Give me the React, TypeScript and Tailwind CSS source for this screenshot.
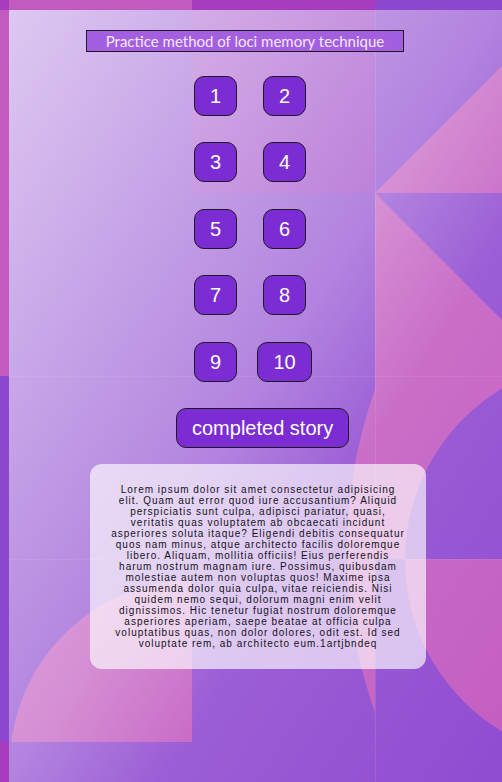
import React from 'react';

const PINK = '#c25ac0';
const MAG = '#a83cbf';
const PURP = '#8e48d0';
const T = 183;

// column / row origins of the background tiles
const COLS = [-174, 9, 192, 375];
const ROWS = [-173, 10, 193, 376, 559, 742];

const BASE: string[][] = [
  [MAG, PINK, MAG, PURP],
  [PINK, PURP, '#9c44c8', PURP],
  [PINK, PURP, PURP, PURP],
  [PURP, PURP, PURP, PINK],
  [PURP, PURP, PURP, PURP],
  [MAG, PURP, PURP, PURP],
];

const Tile = ({ c, r }: { c: number; r: number }) => {
  const x = COLS[c];
  const y = ROWS[r];
  let shape: React.ReactNode = null;
  if (c === 3 && r === 1) shape = <polygon points={`0,${T} ${T},0 ${T},${T}`} fill={PINK} />;
  if (c === 3 && r === 2) shape = <polygon points={`0,0 0,${T} ${T},${T}`} fill={PINK} />;
  if (c === 3 && r === 3) shape = <circle cx={605 - x} cy={560 - y} r={200} fill={PURP} />;
  if (c === 3 && r === 4) shape = <circle cx={605 - x} cy={560 - y} r={200} fill={PINK} />;
  if (c === 1 && r === 4) shape = <circle cx={195 - x} cy={765 - y} r={185} fill={PINK} />;
  if (c === 2 && (r === 3 || r === 4)) shape = <circle cx={827 - x} cy={551 - y} r={480} fill={PINK} />;
  return (
    <svg x={x} y={y} width={T} height={T} overflow="hidden">
      <rect width={T} height={T} fill={BASE[r][c]} />
      {shape}
    </svg>
  );
};

const Background = () => (
  <svg className="absolute inset-0" width="502" height="782" viewBox="0 0 502 782">
    {ROWS.map((_, r) => COLS.map((_, c) => <Tile key={`${r}-${c}`} c={c} r={r} />))}
    <line x1="375.5" y1="10" x2="375.5" y2="782" stroke="white" strokeOpacity="0.1" />
    {[376, 559].map((ly) => (
      <line key={ly} x1="9" y1={ly + 0.5} x2="502" y2={ly + 0.5} stroke="white" strokeOpacity="0.07" />
    ))}
  </svg>
);

const NumButton = ({ label }: { label: string }) => (
  <button className="flex h-[40px] items-center rounded-[10px] border border-[#1e1a24] bg-[#7b2cd3] px-[15px] font-['Liberation_Sans',Arial,sans-serif] text-[20px] text-white">
    {label}
  </button>
);

const LOREM =
  'Lorem ipsum dolor sit amet consectetur adipisicing elit. Quam aut error quod iure accusantium? Aliquid perspiciatis sunt culpa, adipisci pariatur, quasi, veritatis quas voluptatem ab obcaecati incidunt asperiores soluta itaque? Eligendi debitis consequatur quos nam minus, atque architecto facilis doloremque libero. Aliquam, mollitia officiis! Eius perferendis harum nostrum magnam iure. Possimus, quibusdam molestiae autem non voluptas quos! Maxime ipsa assumenda dolor quia culpa, vitae reiciendis. Nisi quidem nemo sequi, dolorum magni enim velit dignissimos. Hic tenetur fugiat nostrum doloremque asperiores aperiam, saepe beatae at officia culpa voluptatibus quas, non dolor dolores, odit est. Id sed voluptate rem, ab architecto eum.1artjbndeq';

export default function App() {
  const nums = ['1', '2', '3', '4', '5', '6', '7', '8', '9', '10'];
  return (
    <div className="relative h-screen w-full overflow-hidden">
      <Background />
      <main className="relative ml-[9px] mt-[10px] flex h-[772px] flex-col items-start bg-[linear-gradient(to_bottom_right,rgba(255,255,255,0.7),rgba(255,255,255,0.32)_50%,rgba(255,255,255,0.12)_65%,rgba(255,255,255,0.02))] pt-[20px]">
        <h1 className="ml-[77px] flex h-[22px] w-[318px] items-center justify-center border border-[#1e1a24] bg-[#a45fe0] font-['Lato',sans-serif] text-[15px] text-[#f3e8fb]">
          Practice method of loci memory technique
        </h1>

        <div className="ml-[172px] mt-[24px] grid grid-cols-[69px_69px] justify-items-center gap-y-[26.4px]">
          {nums.map((n) => (
            <NumButton key={n} label={n} />
          ))}
        </div>

        <button className="ml-[167px] mt-[26px] flex h-[40px] items-center rounded-[10px] border border-[#1e1a24] bg-[#7b2cd3] px-[15px] font-['Liberation_Sans',Arial,sans-serif] text-[20px] text-white">
          completed story
        </button>

        <div className="ml-[81px] mt-[16px] w-[336px] rounded-[12px] bg-white/65 px-5 py-5 text-center font-['Liberation_Sans',Arial,sans-serif] text-[10px] leading-[11px] tracking-[1px] text-[#15131a]">
          {LOREM}
        </div>
      </main>
    </div>
  );
}
